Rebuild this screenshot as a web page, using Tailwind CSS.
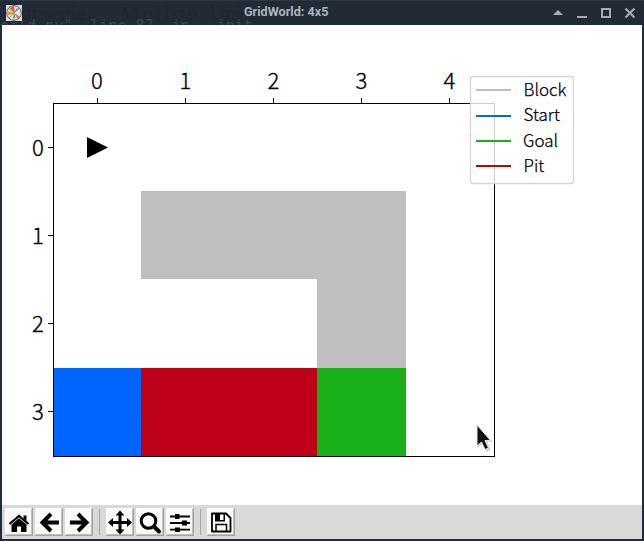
<!DOCTYPE html>
<html lang="en">
<head>
<meta charset="utf-8">
<title>GridWorld: 4x5</title>
<script src="https://cdn.jsdelivr.net/npm/@tailwindcss/browser@4"></script>
</head>
<body class="w-[644px] h-[541px] overflow-hidden bg-[#202c38] flex flex-col">
<header class="relative h-[25px] shrink-0 bg-[#212a35] border-t border-[#2c3540] overflow-hidden">
  <svg class="block w-full h-6" viewBox="0 1 644 24">
    <g fill="#1e2731" font-family="Liberation Serif, serif" font-size="22"><text x="22" y="20" textLength="64">arnegie</text><text x="120" y="20" textLength="78">Mellon</text><text x="209" y="20">Uni</text></g>
    <g fill="#3c4650" font-family="DejaVu Sans Mono, monospace" font-size="15"><text x="0" y="30.5" xml:space="preserve">orld.py", line 87, in __init__</text></g>
    <rect x="6" y="5" width="16" height="16" fill="#dcd9dc"/>
    <circle cx="14" cy="13" r="7.3" fill="#e6e6e9" stroke="#59636d" stroke-width="1"/>
    <path d="M9 18L19 8M9 9L19 18M14 6V20" stroke="#888" stroke-width=".7"/>
    <path d="M15 13L9.500 8.500L13.500 5.500Z" fill="#e06318"/><path d="M14.500 13.500L7.500 11V15.500Z" fill="#d2a319"/><path d="M14 13L17.500 18.500L20 16.500Z" fill="#db7740"/><path d="M14 13L15.500 18H13Z" fill="#6ba060"/><path d="M14 13L17 8L19 9.500Z" fill="#7b9670"/>
    <text x="244" y="16" textLength="84.5" lengthAdjust="spacingAndGlyphs" font-family="Roboto, sans-serif" font-size="12" font-weight="700" fill="#abb4bf">GridWorld: 4x5</text>
    <path d="M553 15L558 10L563 15Z" fill="#a5acb5"/>
    <path d="M577 17H587" stroke="#a5acb5" stroke-width="2"/>
    <rect x="602" y="9" width="8" height="8" fill="none" stroke="#a5acb5" stroke-width="2"/>
    <path d="M625.5 8.5L634.5 17.5M634.5 8.5L625.5 17.5" stroke="#a5acb5" stroke-width="2.2"/>
  </svg>
</header>
<main class="mx-[2px] h-[480px] shrink-0 bg-white">
  <svg class="block w-[640px] h-[480px]" viewBox="2 25 640 480">
    <g shape-rendering="crispEdges">
      <path d="M141 191H406V368H317V279H141Z" fill="#bfbfbf"/>
      <rect x="53" y="368" width="88" height="88" fill="#0065ff"/>
      <rect x="141" y="368" width="176" height="88" fill="#be0119"/>
      <rect x="317" y="368" width="89" height="88" fill="#19b019"/>
      <rect x="53.5" y="103.5" width="441" height="353" fill="none" stroke="#000"/>
      <path d="M97.5 98V103M185.5 98V103M273.5 98V103M361.5 98V103M449.5 98V103M48 147.5H53M48 235.5H53M48 323.5H53M48 411.5H53" stroke="#000"/>
    </g>
    <path d="M87 137L108 147.5L87 158Z"/>
    <g font-family="Noto Sans CJK SC, sans-serif" font-size="22" font-weight="300" text-anchor="middle" stroke="#000" stroke-width=".35">
      <text x="97" y="89">0</text><text x="185.3" y="89">1</text><text x="273.5" y="89">2</text><text x="361.5" y="89">3</text><text x="449.5" y="89">4</text>
      <text x="38" y="156">0</text><text x="38" y="244">1</text><text x="38" y="332">2</text><text x="38" y="420">3</text>
    </g>
    <rect x="470.5" y="76.5" width="103" height="107" rx="3" fill="#fff" fill-opacity=".8" stroke="#d6d6d6" stroke-width="1.3"/>
    <g stroke-width="2" shape-rendering="crispEdges">
      <path d="M476 90H511" stroke="#bfbfbf"/><path d="M476 116H511" stroke="#0065ff"/><path d="M476 141H511" stroke="#19b019"/><path d="M476 166H511" stroke="#be0119"/>
    </g>
    <g font-family="Noto Sans CJK SC, sans-serif" font-size="17" font-weight="300" stroke="#000" stroke-width=".25">
      <text x="523.5" y="96">Block</text><text x="523.5" y="121">Start</text><text x="523" y="147">Goal</text><text x="523.5" y="172">Pit</text>
    </g>
    <path d="M477 425V447L482 443L486 451L490 449L486.500 441H492Z" fill="#777" opacity=".35" transform="translate(.8 .8)"/>
    <path d="M477 425V446L481.500 442L485 449.500L488.500 448L485 440.500H490.500Z" fill="#111" stroke="#e8e8e8" stroke-width="1"/>
  </svg>
</main>
<footer class="mx-[2px] h-[34px] shrink-0 bg-[#d9d9d9]">
  <svg class="block w-[640px] h-[34px]" viewBox="2 505 640 34">
    <defs><g id="button" shape-rendering="crispEdges"><rect width="28" height="28" fill="#a3a3a3"/><rect width="27" height="27" fill="#fff"/><rect x="1" y="1" width="26" height="26" fill="#c0c0c0"/><rect x="1" y="1" width="25" height="25" fill="#fafafa"/></g></defs>
    <use href="#button" x="5" y="508"/><use href="#button" x="35" y="508"/><use href="#button" x="65" y="508"/><use href="#button" x="106" y="508"/><use href="#button" x="136" y="508"/><use href="#button" x="166" y="508"/><use href="#button" x="207" y="508"/>
    <path d="M99.500 509V535M200.500 509V535" stroke="#a5a5a5" shape-rendering="crispEdges"/>
    <path d="M11.500 524.500L19 518.200L26.500 524.500V532H21V526.500H17V532H11.500Z"/>
    <path d="M9.500 524L19 516L28.500 524" fill="none" stroke="#000" stroke-width="2.2"/><path d="M23.500 515.500H26.500V521L23.500 518.500Z"/>
    <g fill="none" stroke="#000" stroke-width="4" stroke-linejoin="miter"><path d="M51 514L42.500 522.500L51 531M43 522.500H59"/><path d="M78 514L86.500 522.500L78 531M86 522.500H70"/></g>
    <path d="M120 510.500L124.500 515.500H121.500V521H127V518L132 522.500L127 527V524H121.500V529.500H124.500L120 534.500L115.500 529.500H118.500V524H113V527L108 522.500L113 518V521H118.500V515.500H115.500Z"/>
    <circle cx="148.500" cy="521" r="7.300" fill="none" stroke="#000" stroke-width="3"/><path d="M154 526.500L159 531.500" stroke="#000" stroke-width="4" stroke-linecap="round"/>
    <path d="M170 516.500H190M170 523H190M170 529.700H190" stroke="#000" stroke-width="1.800"/><path d="M175 514H179.500V519H175ZM182 520.500H187V525.500H182ZM175 527.500H180V532H175Z"/>
    <path d="M212 513.500H226L230.500 518V531.500H212Z" fill="none" stroke="#000" stroke-width="1.800" stroke-linejoin="round"/><path d="M215 514H225V521.500H215Z"/><path d="M220 514.500H223.500V520H220Z" fill="#fafafa"/><path d="M216 531V524.500H226.500V531" fill="none" stroke="#000" stroke-width="1.500"/>
  </svg>
</footer>
</body>
</html>
